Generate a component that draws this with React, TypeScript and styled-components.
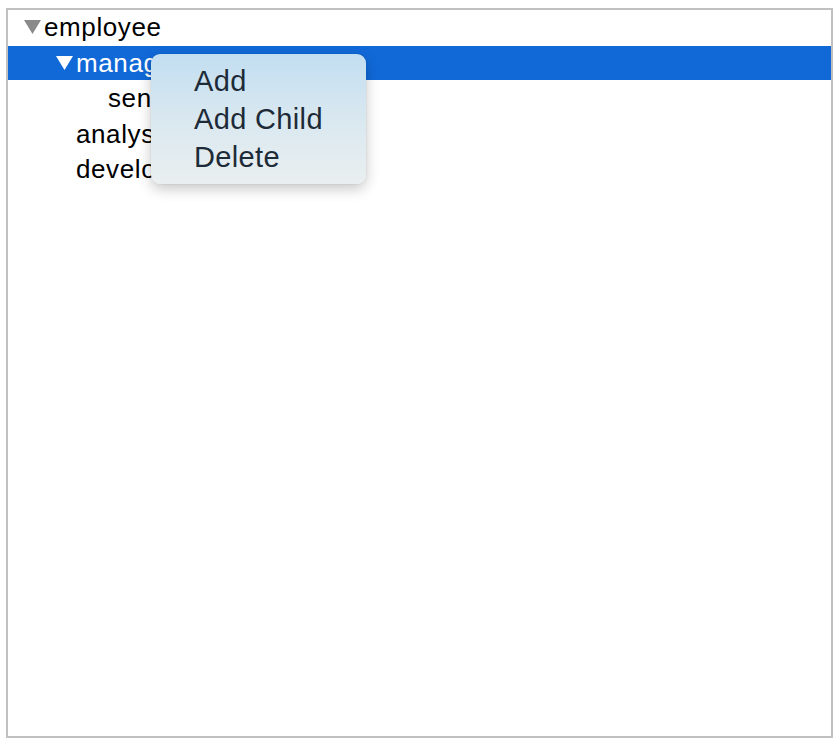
import React from "react";
import styled, { createGlobalStyle } from "styled-components";

const Global = createGlobalStyle`
  html, body { margin: 0; padding: 0; background: #ffffff; }
  body { font-family: "Liberation Sans", Arial, sans-serif; }
`;

const Frame = styled.div`
  position: relative;
  box-sizing: border-box;
  margin: 8px 0 0 6px;
  width: 827px;
  height: 730px;
  border: 2px solid #c0c0c0;
  background: #ffffff;
  display: flex;
  flex-direction: column;
  gap: 1.6px;
`;

const Row = styled.div<{ $level: number; $selected?: boolean }>`
  box-sizing: border-box;
  height: 34px;
  padding-top: 2px;
  padding-left: ${(p) => 16 + p.$level * 32}px;
  display: flex;
  align-items: flex-start;
  background: ${(p) => (p.$selected ? "#1169d8" : "transparent")};
  color: ${(p) => (p.$selected ? "#ffffff" : "#000000")};
  font-size: 26px;
  letter-spacing: 0.6px;
  line-height: 31px;
  white-space: nowrap;
`;

const Toggle = styled.span<{ $selected?: boolean }>`
  width: 20px;
  height: 31px;
  flex: none;
  display: flex;
  align-items: flex-start;
  padding-top: 8px;
  box-sizing: border-box;
  color: ${(p) => (p.$selected ? "#ffffff" : "#8a8a8a")};
`;

const Spacer = styled.span`
  width: 20px;
  flex: none;
`;

const Menu = styled.div`
  position: absolute;
  left: 143px;
  top: 44px;
  width: 215px;
  box-sizing: border-box;
  padding: 8px 0 8px 43px;
  border-radius: 9px;
  background: linear-gradient(180deg, #c2def1 0%, #d9e8f0 50%, #eaeff0 100%);
  box-shadow: 0 5px 14px rgba(0, 0, 0, 0.22), 0 0 2px rgba(0, 0, 0, 0.12);
  display: flex;
  flex-direction: column;
`;

const MenuItem = styled.div`
  font-family: "Liberation Sans", Arial, sans-serif;
  font-size: 29px;
  letter-spacing: 0.35px;
  line-height: 38px;
  color: #1d2b38;
  white-space: nowrap;
`;

const Triangle = () => (
  <svg width="17" height="14" viewBox="0 0 17 14">
    <polygon points="0,0 17,0 8.5,14" fill="currentColor" />
  </svg>
);

type Node = { label: string; level: number; expandable?: boolean; selected?: boolean };

const nodes: Node[] = [
  { label: "employee", level: 0, expandable: true },
  { label: "manager", level: 1, expandable: true, selected: true },
  { label: "senior", level: 2 },
  { label: "analyst", level: 1 },
  { label: "developer", level: 1 },
];

export default function App() {
  return (
    <>
      <Global />
      <Frame>
        {nodes.map((n) => (
          <Row key={n.label} $level={n.level} $selected={n.selected}>
            {n.expandable ? (
              <Toggle $selected={n.selected}>
                <Triangle />
              </Toggle>
            ) : (
              <Spacer />
            )}
            <span>{n.label}</span>
          </Row>
        ))}
        <Menu>
          <MenuItem>Add</MenuItem>
          <MenuItem>Add Child</MenuItem>
          <MenuItem>Delete</MenuItem>
        </Menu>
      </Frame>
    </>
  );
}
